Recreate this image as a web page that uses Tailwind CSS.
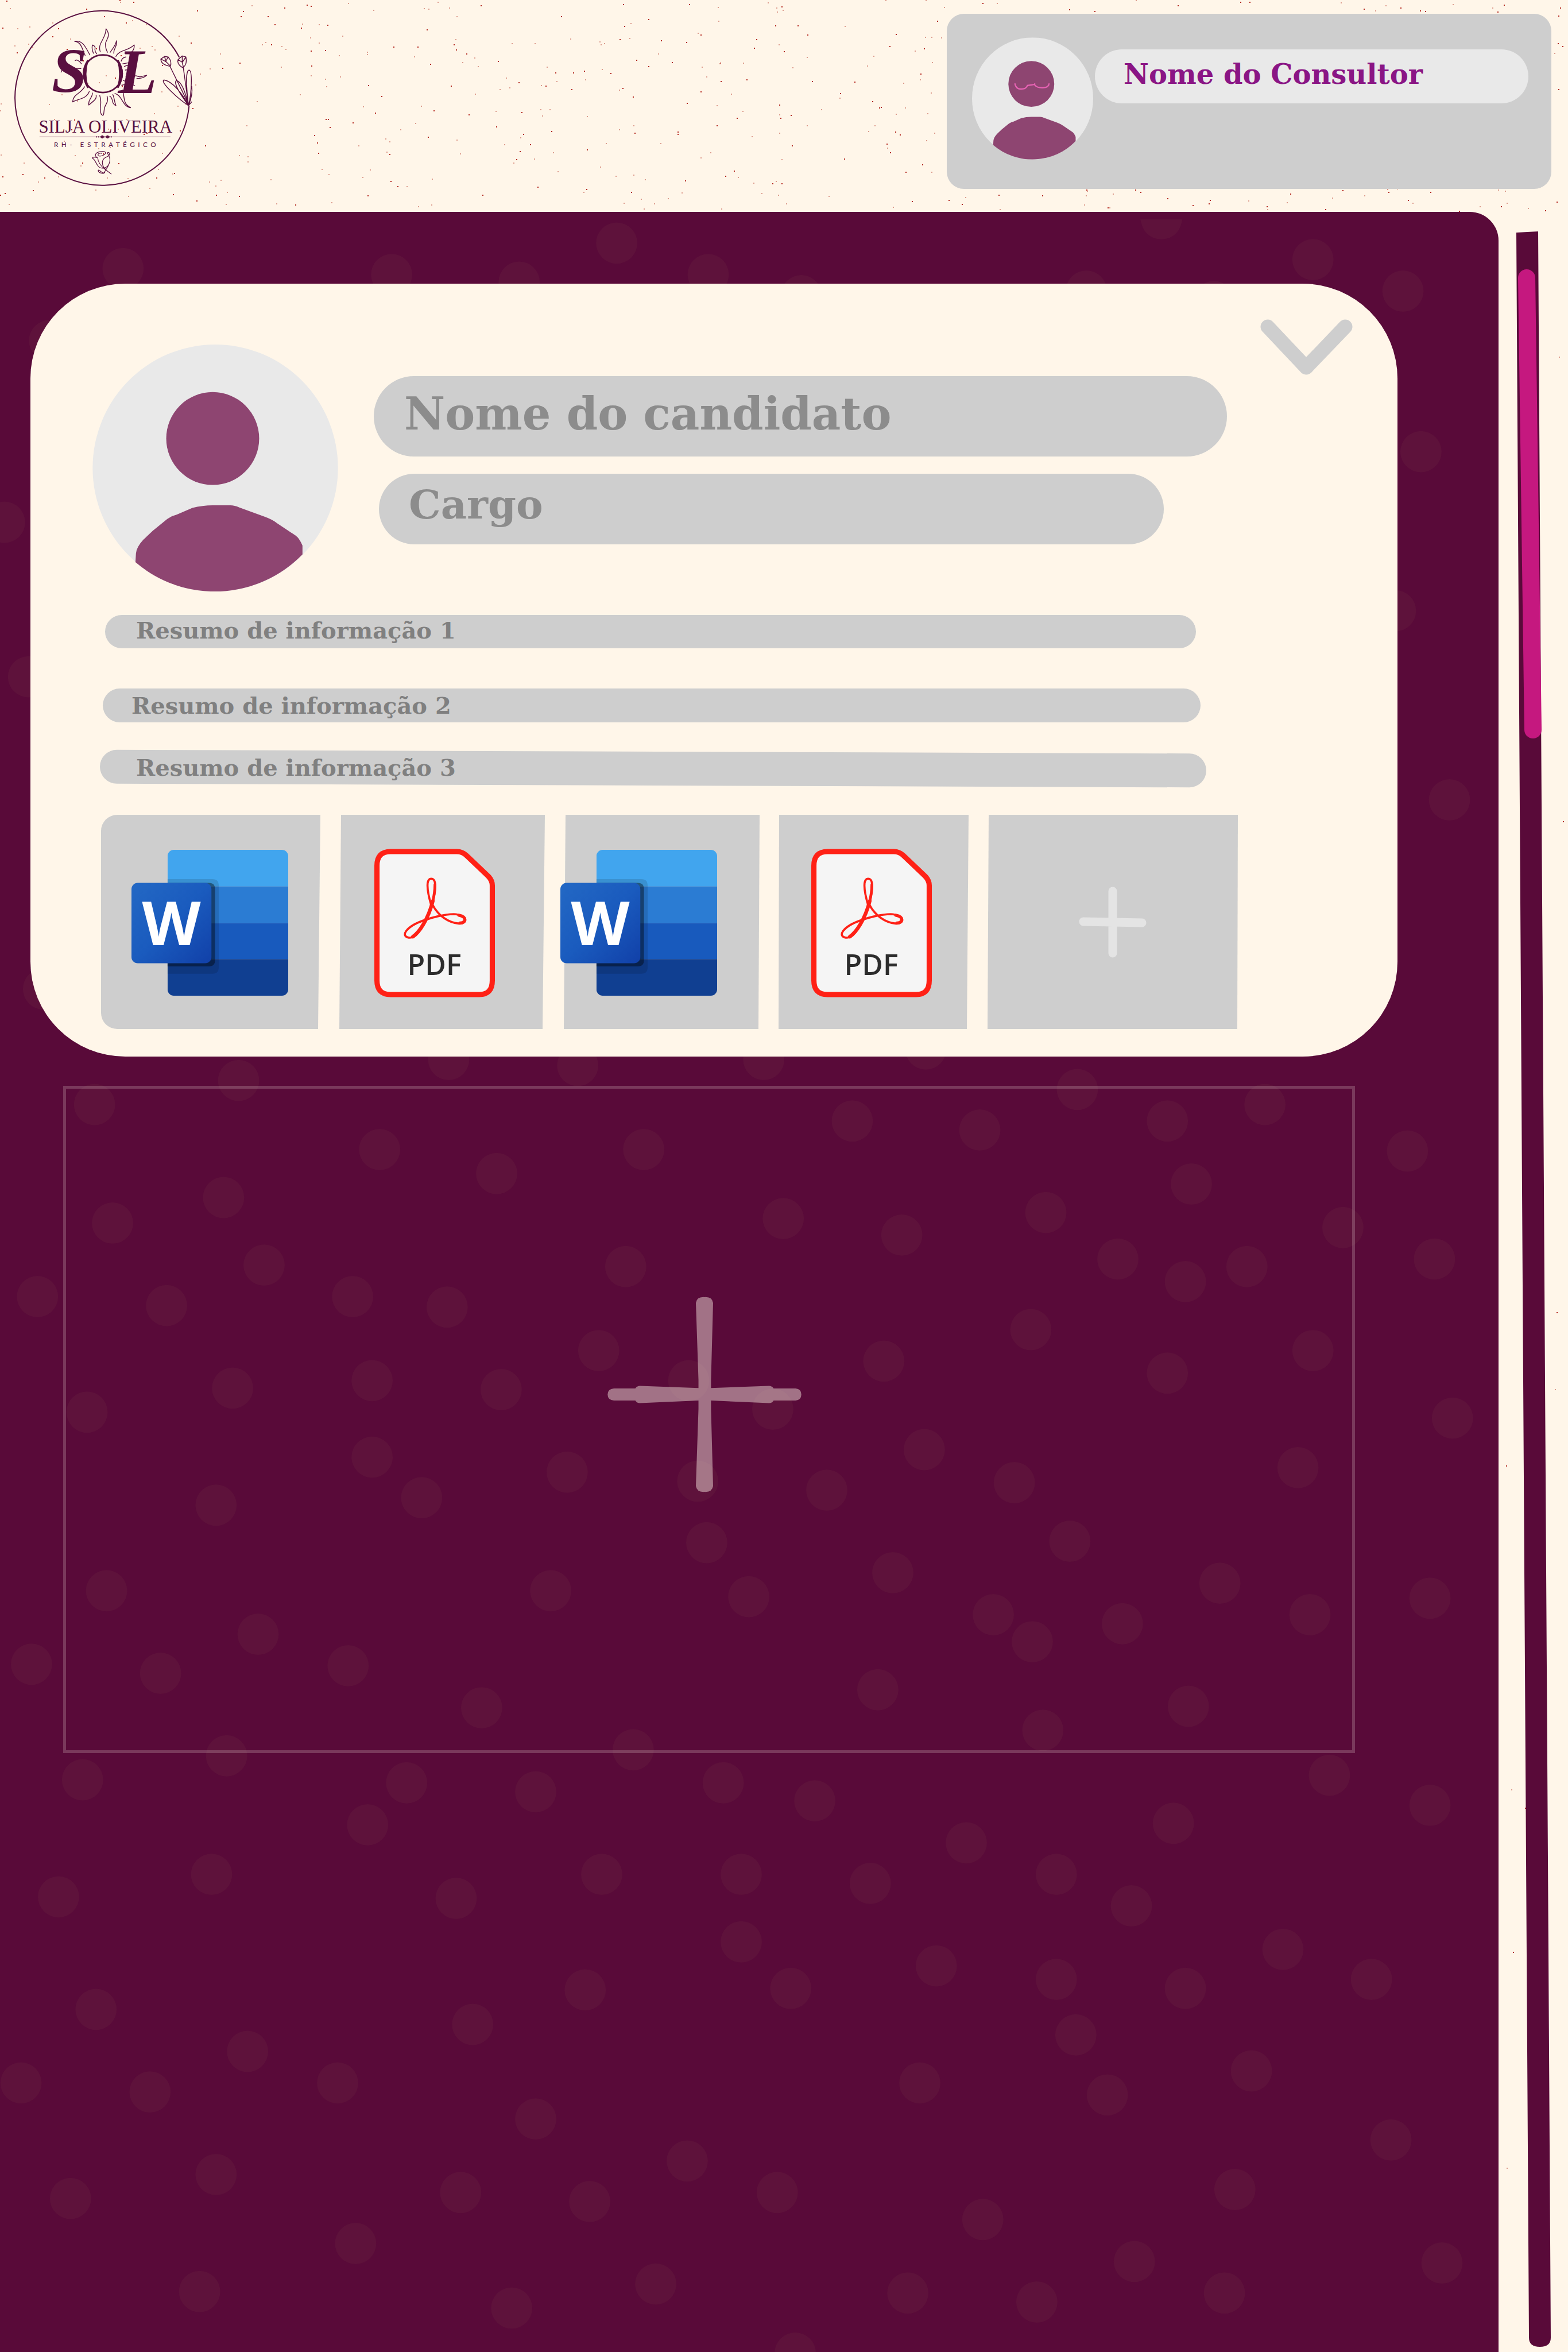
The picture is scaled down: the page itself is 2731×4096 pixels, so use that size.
<!DOCTYPE html>
<html lang="pt-BR">
<head>
<meta charset="utf-8">
<meta name="viewport" content="width=device-width, initial-scale=1">
<title>Silja Oliveira - RH Estratégico</title>
<script src="https://cdn.jsdelivr.net/npm/@tailwindcss/browser@4"></script>
</head>
<body class="relative flex min-h-screen flex-col bg-[#fff6e9] font-['DejaVu_Serif',serif] font-bold">

<!-- Paper grain -->
<svg class="absolute inset-0 h-full w-full" aria-hidden="true"><path id="g1" stroke="#b3261e" stroke-width="2"/><path id="g2" stroke="#dc9a8c" stroke-width="2"/></svg>

<!-- Shared artwork -->
<svg class="absolute h-0 w-0" aria-hidden="true">
  <defs>
    <linearGradient id="wg" x1="0" y1="0" x2="1" y2="1"><stop offset="0" stop-color="#2368c4"/><stop offset=".5" stop-color="#1a5bbe"/><stop offset="1" stop-color="#1140a8"/></linearGradient>
    <clipPath id="wc"><rect x="69" width="231" height="279" rx="12"/></clipPath>
    <symbol id="person" viewBox="0 0 470 473">
      <ellipse cx="235" cy="236.500" rx="235" ry="236.500" fill="#e9e9e9"/>
      <circle cx="230" cy="180" r="89" fill="#8e4571"/>
      <path d="M82 417 83 400Q84 388 97 374L115 357 143 334Q152 328 161 326L191 313Q210 308 230 308H264Q272 308 281 312L330 330Q344 335 353 342L389 366Q396 371 402 385V402A235 236.500 0 0 1 82 417Z" fill="#8e4571"/>
    </symbol>
    <symbol id="word" viewBox="0 0 300 280">
      <g clip-path="url(#wc)">
        <path fill="#41a5ee" d="M69 0h231v70H69z"/><path fill="#2b7cd3" d="M69 70h231v70H69z"/><path fill="#185abd" d="M69 140h231v69H69z"/><path fill="#103f91" d="M69 209h231v71H69z"/>
        <path fill="#000" opacity=".12" d="M0 56h155q12 0 12 12v157q0 12-12 12H0z"/>
        <path fill="#000" opacity=".4" d="M0 63h148q12 0 12 12v136q0 12-12 12H0z"/>
      </g>
      <rect y="63" width="153" height="154" rx="12" fill="url(#wg)"/>
      <text x="76.500" y="182" text-anchor="middle" font-family="Open Sans, sans-serif" font-weight="700" font-size="116" fill="#fff">W</text>
    </symbol>
    <symbol id="pdf" viewBox="0 0 231 284">
      <path d="M31 5H158Q169 5 177 13L218 52Q226 60 226 70V252Q226 279 201 279H31Q5 279 5 252V32Q5 5 31 5Z" fill="#f5f5f5" stroke="#ff2116" stroke-width="10"/>
      <g fill="none" stroke="#ff2116" stroke-linecap="round">
        <path stroke-width="4" d="M109 108C99 74 100 57 109 57 120 57 118 80 111 106 103 136 82 172 66 170 50 167 60 149 94 137 118 129 136 125 152 125 178 126 178 144 162 143 142 141 122 128 111 106"/>
        <path stroke-width="7" d="M112 100C103 135 86 160 74 168"/><path stroke-width="6" d="M162 127C178 130 176 142 164 142"/><path stroke-width="5" d="M116 68Q116 84 111 104"/>
      </g>
      <text x="115" y="242" text-anchor="middle" font-family="Open Sans, sans-serif" font-weight="600" font-size="55" fill="#2c2c2c">PDF</text>
    </symbol>
  </defs>
</svg>

<header class="relative flex h-[369px] shrink-0 items-start justify-between pr-[29px]">
  <a href="#" aria-label="Silja Oliveira, página inicial">
    <svg class="h-[364px] w-[382px]" viewBox="0 0 420 400" fill="none" stroke="#5a0f40" stroke-linecap="round" stroke-linejoin="round">
      <path d="M362 203A167 167 0 1 1 343 109" stroke-width="2.200"/>
      <g stroke-width="1.500">
        <path d="M192 99C186 82 203 75 203 55 214 70 202 76 202 84Q202 94 206 100M179 102Q175 94 177 86 183 88 182 93 181 98 185 103M211 100C216 92 221 88 223 78 225 90 217 92 218 102M222 108C228 95 245 98 257 86 258 99 248 104 240 103M163 106C157 92 155 80 143 79 158 76 164 90 172 105M156 122Q148 112 144 116M232 117Q234 110 241 109M235 122Q246 121 257 116M238 127Q246 124 257 122M240 134Q250 132 257 137M241 146Q258 143 268 147L281 144Q274 151 262 150M236 154Q248 158 258 164M233 163Q242 160 248 168M155 131Q140 130 130 133 118 131 117 138M155 144Q142 146 135 141M158 154Q152 152 148 160M162 166C154 180 140 180 139 195 152 188 165 190 171 175M177 178C177 188 168 190 170 201 178 194 186 190 184 182M191 183C197 200 188 205 194 219 202 226 196 210 203 200Q208 192 205 184M210 184C218 188 212 198 222 202 218 192 219 186 216 181M220 179C234 182 234 204 250 206 234 198 240 186 234 172"/>
      </g>
      <ellipse cx="197" cy="141" rx="37" ry="36" stroke-width="3"/>
      <path d="M168 116Q152 141 168 167Q160 141 168 116M226 116Q242 141 226 167Q233 141 226 116" stroke-width="3" fill="#5a0f40"/>
      <g stroke-width="1.600">
        <path d="M326 128 358 193 361 202M351 129 361 202M326 127Q308 124 308 113L315 108 322 109Q330 118 326 127ZM308 113 318 118 315 108M318 118 325 125M322 109 317 118M349 129Q338 122 341 114L349 107 356 109Q359 122 351 129ZM341 114 349 119 349 107M349 119 351 128M356 109 350 118M361 202C357 170 355 135 362 134 369 135 367 178 361 202ZM361 202C342 190 305 156 314 153 330 155 350 180 361 202ZM361 202C345 180 331 158 338 154 348 156 356 180 361 202ZM361 202Q370 180 367 165M361 202 367 195"/>
      </g>
      <path d="M76 262H326" stroke-width=".700"/><path d="M185 262H217" stroke-width="2.500" stroke-dasharray="0 4"/><circle cx="196" cy="262" r="2.500" fill="#5a0f40"/><circle cx="206" cy="262" r="2.500" fill="#5a0f40"/>
      <path stroke-width="1.300" d="M185 301C175 292 200 286 202 292 203 298 185 302 188 295 190 292 195 293 195 294M187 302Q177 299 177 303C184 305 184 322 197 322 208 322 214 308 208 297 203 291 208 290 210 294 211 302 196 298 196 312Q197 320 202 324M188 326C190 323 194 332 199 331 203 325 208 318 210 310M188 326C188 332 201 334 201 329M187 302Q188 314 201 324L213 333"/>
      <g fill="#5a0f40" stroke="none">
        <g font-family="Liberation Serif, serif" font-weight="700" font-style="italic" font-size="122"><text x="99" y="176">S</text><text x="226" y="178">L</text></g>
        <text x="202" y="254" text-anchor="middle" font-family="Liberation Serif, serif" font-weight="400" font-size="34">SILJA OLIVEIRA</text>
        <text x="204" y="281" text-anchor="middle" font-family="Lato, sans-serif" font-weight="400" font-size="13" letter-spacing="6">RH- ESTRATÉGICO</text>
      </g>
    </svg>
  </a>
  <section class="mt-6 flex h-[305px] w-[1053px] items-start gap-[3px] rounded-[30px] bg-[#cecece] pt-[41px] pr-10 pl-11">
    <svg class="h-[213px] w-[211px] shrink-0" viewBox="0 0 470 473" role="img" aria-label="Foto do consultor"><use href="#person"/><path d="M166 178Q170 200 190 200T215 186L243 182V178M243 184Q252 196 275 195T299 178" fill="none" stroke="#e763b4" stroke-width="5"/></svg>
    <h1 class="mt-[21px] flex h-[94px] flex-1 items-center rounded-full bg-[#e9e9e9] pb-2 pl-[50px] text-[48px] leading-none text-[#8a1585]">Nome do Consultor</h1>
  </section>
</header>

<div class="relative flex flex-1">
  <main class="relative flex-1 overflow-hidden rounded-tr-[50px] bg-[#590a39] pt-[125px] pr-[176px] pl-[53px]">
    <svg class="absolute top-[-369px] left-0 h-[4096px] w-[2731px]" viewBox="0 0 1045 1567.300" preserveAspectRatio="none" aria-hidden="true" fill="none" stroke="#5e123b" stroke-width="27.500" stroke-linecap="round">
      <path d="M82 179h0M261 183h0M346 188h0M411 162h0M472 183h0M534 197h0M724 194h0M809 201h0M875 173h0M935 194h0M947 301h0M930 407h0M966 533h0M33 227h0M3 348h0M19 451h0M29 659h0
M63 736h0M159 720h0M299 706h0M385 710h0M509 706h0M617 699h0M718 726h0M843 736h0M778 747h0M653 753h0M568 747h0M938 767h0M253 766h0M429 766h0M331 782h0M149 798h0M75 815h0M522 812h0M601 823h0M697 808h0M794 789h0M895 818h0M956 839h0M745 839h0M790 854h0M831 844h0M176 843h0M417 844h0M25 864h0M111 870h0M235 864h0M298 871h0M399 900h0M687 886h0M875 900h0M589 907h0M778 915h0M968 945h0M58 941h0M155 925h0M248 920h0M334 926h0M459 920h0M515 939h0M616 966h0M676 988h0M865 978h0M248 971h0M281 998h0M144 1003h0M378 981h0M465 987h0M551 993h0M471 1028h0M713 1027h0M595 1048h0M499 1064h0M367 1060h0M71 1060h0M813 1055h0M953 1065h0M662 1076h0M873 1076h0M748 1082h0M688 1094h0M172 1089h0M21 1109h0M107 1115h0M232 1110h0M321 1138h0M585 1126h0M792 1137h0M695 1153h0M151 1170h0M422 1166h0M55 1186h0M271 1188h0M357 1194h0M482 1188h0M543 1200h0M886 1183h0M953 1203h0M245 1216h0M644 1228h0M782 1215h0M141 1249h0M39 1264h0M304 1265h0M401 1249h0M494 1249h0M580 1255h0M704 1249h0M754 1270h0M494 1294h0M624 1310h0M855 1299h0M390 1326h0M527 1325h0M704 1319h0M790 1325h0M914 1319h0M64 1339h0M315 1349h0M717 1356h0M165 1367h0M14 1388h0M100 1394h0M225 1388h0M613 1388h0M738 1396h0M834 1380h0M357 1412h0M927 1426h0M458 1440h0M144 1449h0M47 1465h0M307 1461h0M393 1467h0M518 1461h0M823 1459h0M655 1479h0M237 1495h0M756 1507h0M961 1508h0M133 1527h0M437 1522h0M341 1538h0M605 1528h0M691 1534h0M816 1528h0M530 1568h0"/>
      <path stroke="none" fill="#5e123b" d="M760 146H788Q786 159 774 159.500 762 159 760 146Z"/>
    </svg>

    <article class="relative flex flex-col rounded-[165px] bg-[#fff6e9] pb-12">
      <div class="flex items-start pt-[62px] pr-[78px] pl-[108px]">
        <svg class="mt-11 h-[430px] w-[428px] shrink-0" role="img" aria-label="Foto do candidato"><use href="#person"/></svg>
        <div class="mt-[99px] mr-[58px] ml-[62px] flex flex-1 flex-col gap-[30px] text-[#8c8c8c]">
          <h2 class="flex h-[140px] items-center rounded-full bg-[#cecece] pb-2 pl-[53px] text-[78px] leading-none">Nome do candidato</h2>
          <p class="mr-[110px] ml-[9px] flex h-[123px] items-center rounded-full bg-[#cecece] pb-4 pl-[52px] text-[70px] leading-none">Cargo</p>
        </div>
        <button type="button" aria-label="Recolher" class="shrink-0"><svg class="h-[98px] w-[161px]" viewBox="0 0 161 98" fill="none" stroke="#cecece" stroke-width="25" stroke-linecap="round" stroke-linejoin="round"><path d="M13 13 80 84 148 13"/></svg></button>
      </div>

      <ul class="mt-[41px] flex flex-col text-[40px] leading-none text-[#808080]">
        <li class="mr-[351px] ml-[130px] flex h-[58px] items-center rounded-full bg-[#cecece] pb-1 pl-[54px]">Resumo de informação 1</li>
        <li class="mt-[70px] mr-[343px] ml-[126px] flex h-[59px] items-center rounded-full bg-[#cecece] pl-[50px]">Resumo de informação 2</li>
        <li class="relative mt-[51px] mr-[333px] ml-[121px] flex h-[59px] items-center pb-1 pl-[63px]"><span class="absolute inset-0 rotate-[0.2deg] rounded-full bg-[#cecece]"></span><span class="relative">Resumo de informação 3</span></li>
      </ul>

      <div class="mt-[51px] ml-[123px] flex h-[373px] gap-[33px]">
        <a href="#" aria-label="Documento Word 1" class="relative w-[382px] pt-[61px] pl-[53px] before:absolute before:inset-0 before:rounded-l-[28px] before:bg-[#cecece] before:[clip-path:polygon(0_0,100%_0,calc(100%-4px)_100%,0_100%)]"><svg class="relative h-[255px] w-[273px]"><use href="#word"/></svg></a>
        <a href="#" aria-label="Documento PDF 1" class="relative w-[358px] pt-[59px] pl-[61px] before:absolute before:inset-0 before:bg-[#cecece] before:[clip-path:polygon(3px_0,100%_0,calc(100%-4px)_100%,0_100%)]"><svg class="relative h-[259px] w-[210px]"><use href="#pdf"/></svg></a>
        <a href="#" aria-label="Documento Word 2" class="relative w-[341px] pt-[61px] before:absolute before:inset-0 before:bg-[#cecece] before:[clip-path:polygon(3px_0,100%_0,calc(100%-2px)_100%,0_100%)]"><svg class="relative -ml-[6px] h-[255px] w-[273px]"><use href="#word"/></svg></a>
        <a href="#" aria-label="Documento PDF 2" class="relative w-[331px] pt-[59px] pl-[57px] before:absolute before:inset-0 before:bg-[#cecece] before:[clip-path:polygon(1px_0,100%_0,calc(100%-3px)_100%,0_100%)]"><svg class="relative h-[259px] w-[210px]"><use href="#pdf"/></svg></a>
        <button type="button" aria-label="Adicionar documento" class="flex w-[436px] items-center justify-center bg-[#cecece] [clip-path:polygon(2px_0,100%_0,calc(100%-1px)_100%,0_100%)]"><svg class="h-[124px] w-[118px]" viewBox="0 0 118 124" fill="none" stroke="#e4e4e4" stroke-width="15" stroke-linecap="round"><path d="M8 61 110 63M59 8V116"/></svg></button>
      </div>
    </article>

    <button type="button" aria-label="Adicionar candidato" class="relative mt-[51px] mr-[74px] ml-[57px] flex h-[1162px] w-[calc(100%-131px)] items-center justify-center border-[5px] border-[#fff6e9]/20 pr-4 pb-[88px]">
      <svg class="h-[341px] w-[338px]" viewBox="0 0 371 375" fill="#fff6e9" opacity=".44"><path d="M169 12Q171 0 185.500 1 200 0 202 12L198 160V175L309 171Q315 171 318 176H360Q371 177 371 187.500T360 199H318Q315 204 309 204L198 199V215L202 363Q200 375 185.500 374 171 375 169 363L174 215V199L62 204Q56 204 53 199H12Q0 198 0 187.500T12 176H53Q56 171 62 171L174 175V160Z"/></svg>
    </button>
  </main>

  <div class="w-[121px] shrink-0">
    <svg class="h-[3727px] w-[121px]" viewBox="0 0 121 3727" role="img" aria-label="Barra de rolagem">
      <path d="M31 36 69 34 91 3702Q91 3718 72 3718T53 3702Z" fill="#590a39"/>
      <path d="M49 115 60 902" stroke="#c5187f" stroke-width="30" stroke-linecap="round"/>
    </svg>
  </div>
</div>

<script>
  // Scatter the grain with a fixed seed so that it is the same on every load
  let s = 7;
  const r = () => (s = (s * 16807) % 2147483647) / 2147483647;
  const specks = (n, x, y, w, h) => {
    let d = '';
    while (n--) d += `M${Math.round(x + r() * w)} ${Math.round(y + r() * h)}h2`;
    return d;
  };
  const W = innerWidth, H = document.body.scrollHeight;
  g1.setAttribute('d', specks(330, 0, 0, W, 369) + specks(110, W - 120, 369, 120, H - 369));
  g2.setAttribute('d', specks(380, 0, 0, W, 369) + specks(130, W - 120, 369, 120, H - 369));
</script>
</body>
</html>
